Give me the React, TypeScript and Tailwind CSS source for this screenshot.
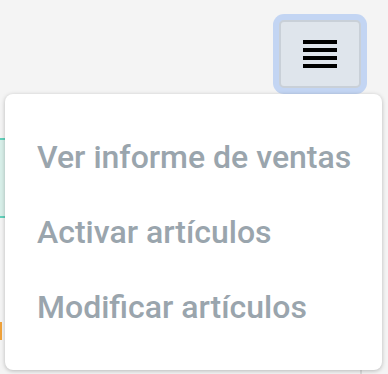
import React from 'react';

const items = ['Ver informe de ventas', 'Activar artículos', 'Modificar artículos'];

export default function App() {
  return (
    <div className="relative h-[374px] w-[388px] overflow-hidden bg-[#f4f4f4]" style={{ fontFamily: 'Roboto, "Noto Sans", sans-serif' }}>
      {/* page behind the menu */}
      <div className="flex justify-end pr-[27px] pt-[20px]">
        <button className="flex h-[68px] w-[82px] flex-col items-center justify-center gap-[4px] rounded-[5px] border-2 border-[#c9d0d8] bg-[#dfe5ec] ring-[6px] ring-[#c3d5f3]">
          <span className="h-[4px] w-[34px] bg-black" />
          <span className="h-[4px] w-[34px] bg-black" />
          <span className="h-[4px] w-[34px] bg-black" />
          <span className="h-[4px] w-[34px] bg-black" />
        </button>
      </div>
      <div className="mt-[50px] h-[80px] w-[40px] border-y-2 border-[#62d1bb] bg-[#d8efe9]" />
      <div className="mt-[104px] h-[18px] w-[2px] bg-[#f0a23a]" />
      <div className="absolute bottom-0 left-[360px] h-[8px] w-[2px] bg-[#dcdcdc]" />

      {/* dropdown */}
      <div className="absolute left-[5px] top-[94px] flex h-[276px] w-[377px] flex-col rounded-lg bg-white py-[25px] shadow-[0_1px_4px_rgba(0,0,0,0.25)]">
        {items.map((item) => (
          <div key={item} className="flex h-[75px] items-center pl-[32px] text-[32px] font-medium text-[#9aa5ad]">
            {item}
          </div>
        ))}
      </div>
    </div>
  );
}
